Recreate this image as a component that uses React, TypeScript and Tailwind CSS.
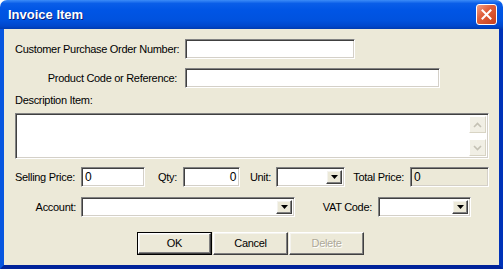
import React from 'react';

const font = "font-['Liberation_Sans',Arial,sans-serif]";

const sunken =
    'border border-t-[#828282] border-l-[#828282] border-r-white border-b-white shadow-[inset_1px_1px_0_#404040,inset_-1px_-1px_0_#d4d0c8]';
const raised =
    'border border-t-white border-l-white border-r-[#404040] border-b-[#404040] shadow-[inset_-1px_-1px_0_#808080,inset_1px_1px_0_#f4f3ee]';

const TextBox: React.FC<{ w: string; value?: string; right?: boolean; disabled?: boolean }> = ({ w, value, right, disabled }) => (
    <div className={`${w} shrink-0 h-[20px] ${sunken} ${disabled ? 'bg-[#ece9d8]' : 'bg-white'} flex items-center px-[3px] ${right ? 'justify-end' : ''}`}>
        <span className="text-[12px] leading-none text-black">{value}</span>
    </div>
);

const DropArrow = () => (
    <div className={`w-[16px] h-full bg-[#ece9d8] ${raised} flex items-center justify-center`}>
        <svg width="7" height="4" viewBox="0 0 7 4"><path d="M0 0h7L3.5 4z" fill="#000" /></svg>
    </div>
);

const Combo: React.FC<{ w: string }> = ({ w }) => (
    <div className={`${w} shrink-0 h-[20px] ${sunken} bg-white flex justify-end p-[2px]`}>
        <DropArrow />
    </div>
);

const ScrollBtn: React.FC<{ up?: boolean }> = ({ up }) => (
    <div className="w-[17px] h-[17px] bg-[#f1efe5] border border-t-white border-l-white border-r-[#d8d4c4] border-b-[#d8d4c4] flex items-center justify-center">
        <svg width="9" height="6" viewBox="0 0 9 6">
            <path d={up ? 'M1 5l3.5-3.5L8 5' : 'M1 1l3.5 3.5L8 1'} stroke="#c4c1b4" strokeWidth="1.6" fill="none" />
        </svg>
    </div>
);

const Button: React.FC<{ label: string; def?: boolean; disabled?: boolean }> = ({ label, def, disabled }) => (
    <div className={`w-[75px] h-[23px] ${def ? 'border border-black' : ''}`}>
        <div className={`w-full h-full bg-[#ece9d8] ${raised} flex items-center justify-center`}>
            <span className={`text-[11px] ${disabled ? 'text-[#aca899] [text-shadow:1px_1px_0_#fff]' : 'text-black'}`}>{label}</span>
        </div>
    </div>
);

export default function App() {
    return (
        <div className={`w-[503px] h-[269px] bg-white flex flex-col ${font} select-none`}>
            {/* Title bar */}
            <div className="h-[29px] shrink-0 rounded-t-[7px] flex items-center justify-between pl-[8px] pr-[6px] bg-[linear-gradient(180deg,#3c8cf8_0%,#0a5ee8_12%,#0055e5_35%,#0052de_70%,#0047cc_90%,#003bb0_100%)]">
                <span className="text-white font-bold text-[13px] [text-shadow:1px_1px_0_#0a1e7a]">Invoice Item</span>
                <div className="w-[21px] h-[21px] rounded-[3px] border border-white bg-[linear-gradient(135deg,#f0a088_0%,#e0603c_40%,#c8401c_100%)] flex items-center justify-center">
                    <svg width="11" height="11" viewBox="0 0 11 11">
                        <path d="M1.5 1.5l8 8M9.5 1.5l-8 8" stroke="#fff" strokeWidth="2" strokeLinecap="square" />
                    </svg>
                </div>
            </div>

            {/* Body */}
            <div className="flex-1 bg-[#ece9d8] border-l-[4px] border-l-[#0756e0] border-r-[4px] border-r-[#0032b8] border-b-[4px] border-b-[#00239a] pl-[11px] pt-[10px] text-[11px] tracking-[-0.3px] text-black flex flex-col">
                <div className="flex items-center h-[20px]">
                    <span className="w-[170px] shrink-0 pr-[8px] text-right whitespace-nowrap">Customer Purchase Order Number:</span>
                    <TextBox w="w-[170px]" />
                </div>
                <div className="flex items-center h-[20px] mt-[9px]">
                    <span className="w-[170px] shrink-0 pr-[8px] text-right whitespace-nowrap">Product Code or Reference:</span>
                    <TextBox w="w-[255px]" />
                </div>
                <div className="mt-[6px] h-[13px] leading-[13px]">Description Item:</div>
                <div className={`mt-[6px] w-[474px] h-[46px] ${sunken} bg-white flex justify-end p-[2px]`}>
                    <div className="w-[17px] flex flex-col justify-between">
                        <ScrollBtn up />
                        <ScrollBtn />
                    </div>
                </div>

                <div className="flex items-center h-[20px] mt-[8px]">
                    <span className="w-[66px] shrink-0 whitespace-nowrap">Selling Price:</span>
                    <TextBox w="w-[64px]" value="0" />
                    <span className="w-[38px] shrink-0 pr-[6px] text-right">Qty:</span>
                    <TextBox w="w-[57px]" value="0" right />
                    <span className="w-[36px] shrink-0 pr-[5px] text-right">Unit:</span>
                    <Combo w="w-[69px]" />
                    <span className="w-[65px] shrink-0 pr-[6px] text-right whitespace-nowrap">Total Price:</span>
                    <TextBox w="w-[79px]" value="0" disabled />
                </div>

                <div className="flex items-center h-[20px] mt-[10px]">
                    <span className="w-[66px] shrink-0 pr-[5px] text-right">Account:</span>
                    <Combo w="w-[214px]" />
                    <span className="w-[83px] shrink-0 pr-[6px] text-right whitespace-nowrap">VAT Code:</span>
                    <Combo w="w-[93px]" />
                </div>

                <div className="flex gap-[1px] mt-[15px] ml-[122px]">
                    <Button label="OK" def />
                    <Button label="Cancel" />
                    <Button label="Delete" disabled />
                </div>
            </div>
        </div>
    );
}
